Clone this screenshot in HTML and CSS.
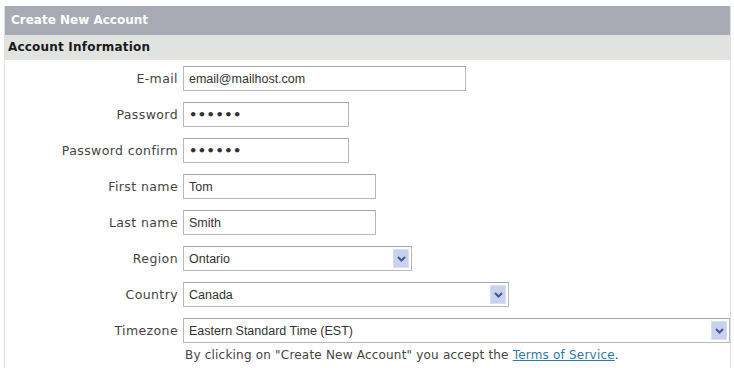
FILE: index.html
```html
<!DOCTYPE html>
<html>
  <head>
    <title>Create New Account</title>
    <link rel="stylesheet" href="styles.css">
  </head>
  <body>
    <div class="panel">
      <div class="panel-title">Create New Account</div>
      <div class="section-title">Account Information</div>

      <form class="form">
        <label class="label">E-mail</label>
        <input class="field w-email" type="text" value="email@mailhost.com">

        <label class="label">Password</label>
        <input class="field field-pass w-pass" type="password" value="secret">

        <label class="label">Password confirm</label>
        <input class="field field-pass w-pass" type="password" value="secret">

        <label class="label">First name</label>
        <input class="field w-name" type="text" value="Tom">

        <label class="label">Last name</label>
        <input class="field w-name" type="text" value="Smith">

        <label class="label">Region</label>
        <div class="field select w-region">
          <span class="select-value">Ontario</span>
          <span class="select-btn"><svg width="9" height="6" viewBox="0 0 9 6"><path d="M1 1 L4.5 4.5 L8 1" fill="none" stroke="#3f5a8c" stroke-width="2"/></svg></span>
        </div>

        <label class="label">Country</label>
        <div class="field select w-country">
          <span class="select-value">Canada</span>
          <span class="select-btn"><svg width="9" height="6" viewBox="0 0 9 6"><path d="M1 1 L4.5 4.5 L8 1" fill="none" stroke="#3f5a8c" stroke-width="2"/></svg></span>
        </div>

        <label class="label">Timezone</label>
        <div class="field select w-tz">
          <span class="select-value">Eastern Standard Time (EST)</span>
          <span class="select-btn"><svg width="9" height="6" viewBox="0 0 9 6"><path d="M1 1 L4.5 4.5 L8 1" fill="none" stroke="#3f5a8c" stroke-width="2"/></svg></span>
        </div>

        <span></span>
        <p class="terms">By clicking on "Create New Account" you accept the <a href="#">Terms of Service</a>.</p>
      </form>
    </div>
  </body>
</html>
```

FILE: styles.css
```css
body {
  margin: 0;
  background-color: #fff;
  font-family: "DejaVu Sans", Verdana, sans-serif;
  font-size: 12px;
  color: #444;
}

.panel {
  margin: 6px 3px 0 4px;
  border-left: 1px solid #e0e0e0;
  border-right: 1px solid #e0e0e0;
  height: 362px;
}

.panel-title {
  height: 29px;
  line-height: 29px;
  padding-left: 6px;
  background-color: #a8abb4;
  color: #fff;
  font-weight: bold;
  font-size: 12px;
}

.section-title {
  height: 25px;
  line-height: 25px;
  padding-left: 3px;
  background-color: #e1e3e1;
  color: #1a1a1a;
  font-weight: bold;
  font-size: 12px;
  letter-spacing: 0.2px;
}

.form {
  display: grid;
  grid-template-columns: 173px 1fr;
  column-gap: 5px;
  row-gap: 11px;
  align-items: center;
  padding-top: 6px;
}

.label {
  text-align: right;
  color: #444;
  font-size: 12.5px;
  letter-spacing: 0.4px;
}

.field {
  box-sizing: border-box;
  height: 25px;
  margin: 0;
  padding: 0 5px;
  border: 1px solid #b8b8b8;
  border-top-color: #a4a4a4;
  background-color: #fff;
  font-family: "Liberation Sans", Arial, sans-serif;
  font-size: 12.5px;
  color: #333;
  outline: none;
}

.field-pass {
  font-family: "DejaVu Sans", Verdana, sans-serif;
  font-size: 13px;
  font-weight: bold;
  letter-spacing: 0.5px;
}

.w-email { width: 283px; }
.w-pass { width: 166px; }
.w-name { width: 193px; }
.w-region { width: 229px; }
.w-country { width: 326px; }
.w-tz { width: 547px; }

.select {
  display: flex;
  align-items: center;
  padding-right: 2px;
}

.select-value {
  flex: 1;
}

.select-btn {
  display: flex;
  align-items: center;
  justify-content: center;
  width: 16px;
  height: 19px;
  background-color: #c8d2ef;
  border: 1px solid #d8dff3;
  box-sizing: border-box;
}

.terms {
  margin: -6px 0 0 2px;
  color: #444;
  font-size: 12px;
  letter-spacing: 0.2px;
}

.terms a {
  color: #2f7aa8;
}
```
